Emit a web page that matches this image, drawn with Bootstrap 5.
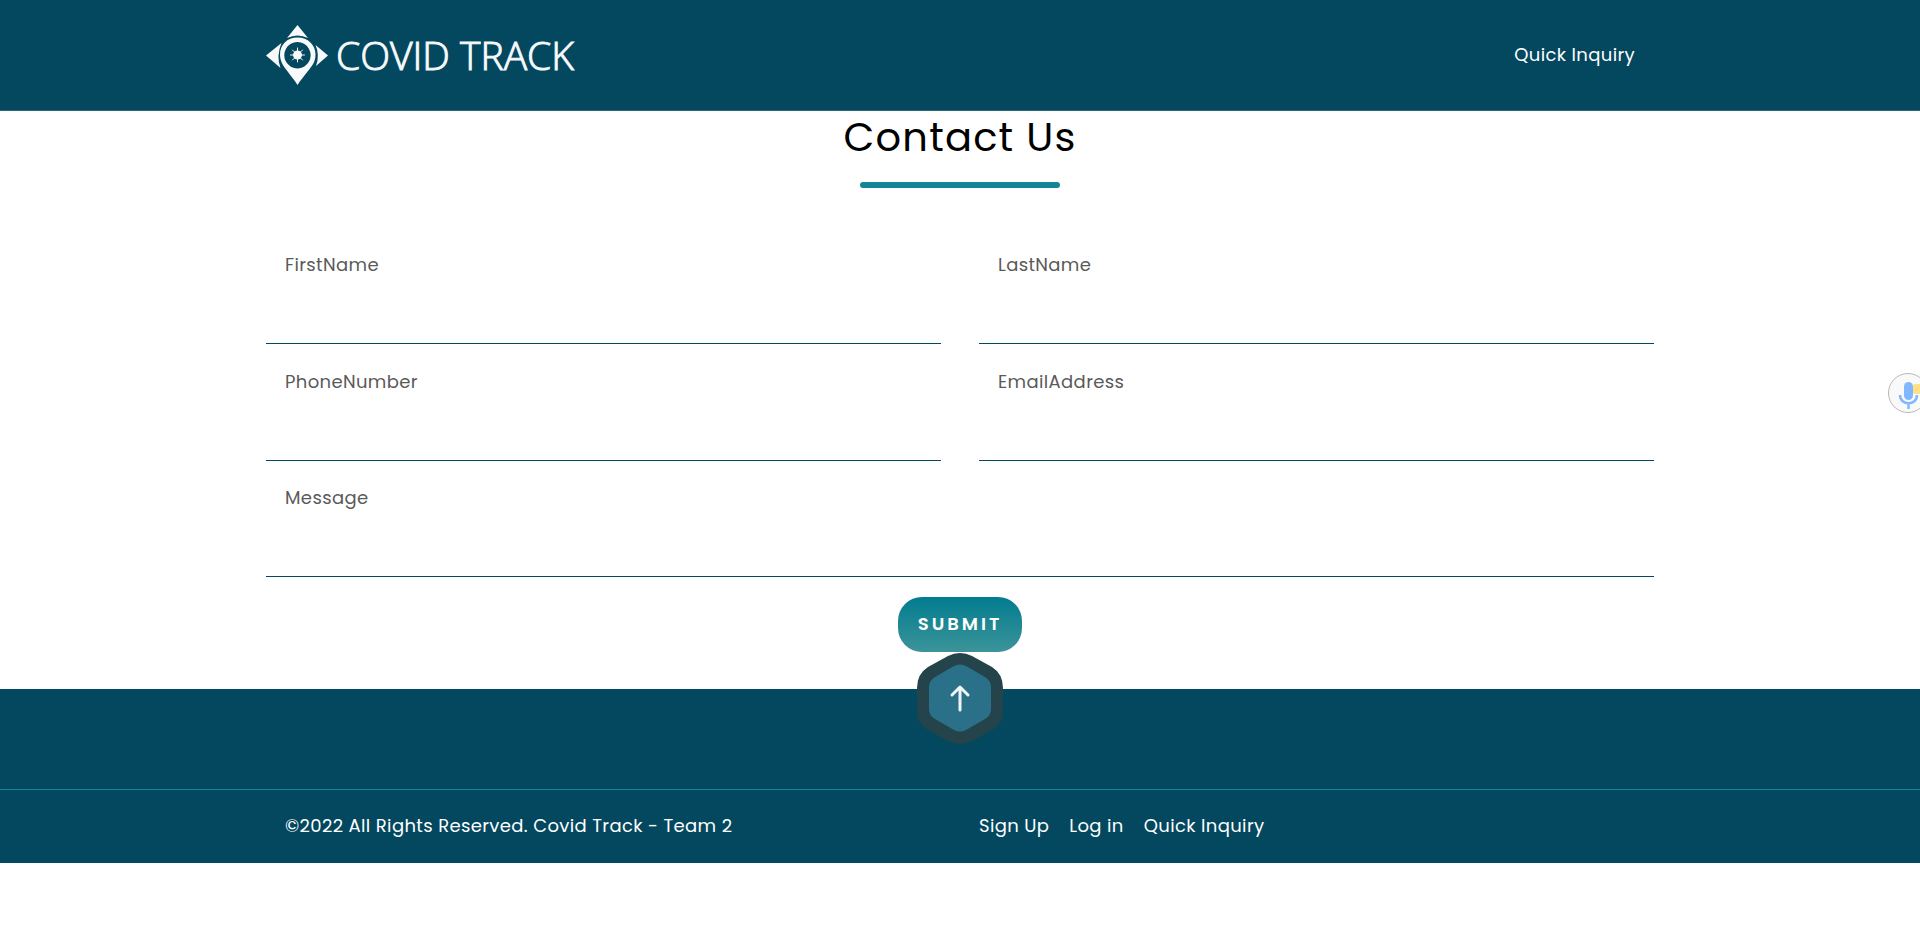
<!DOCTYPE html>
<html lang="en">
<head>
<meta charset="utf-8">
<meta name="viewport" content="width=device-width, initial-scale=1">
<title>Covid Track - Contact Us</title>
<link rel="stylesheet" href="https://cdn.jsdelivr.net/npm/bootstrap@5.3.0/dist/css/bootstrap.min.css">
<style>
  :root { --navy: #03485f; --teal: #148594; }
  body { font-family: Poppins, Inter, "Open Sans", sans-serif; font-size: 18px; line-height: 28px; letter-spacing: .02em; overflow-x: hidden; color: #000; }
  .page-width { max-width: 1426px; padding-left: 19px; padding-right: 19px; }
  .inset-x { padding-left: 19px; padding-right: 19px; }
  .site-header { background: var(--navy); border-bottom: 1px solid #2c6579; }
  .site-header .navbar { min-height: 110px; padding: 0; }
  .brand-name { font-family: "Open Sans", sans-serif; font-weight: 300; font-size: 39px; line-height: 52px; letter-spacing: normal; -webkit-text-stroke: 1px #f3f6f8; }
  .site-link { color: #fff; text-decoration: none; }
  .site-link:hover { color: #9fd5dc; }
  .page-title { font-size: 40px; line-height: 53px; font-weight: 400; letter-spacing: .03em; }
  .title-bar { width: 200px; height: 6px; border-radius: 3px; margin-top: 18px; background: var(--teal); }
  .contact-form { --bs-gutter-x: 38px; padding-top: 39px; }
  .line-field { height: 117px; border-bottom: 1px solid var(--navy); padding: 24px 19px 0; }
  .message-field { height: 116px; padding-top: 23px; }
  .line-field label { color: #5a5a5a; line-height: 28px; }
  .line-field .form-control { height: 48px; border: 0; padding: 0; resize: none; font-size: 18px; background: transparent; box-shadow: none; }
  .submit-btn { width: 124px; height: 55px; border: 0; border-radius: 24px; background: linear-gradient(#017c8f, #3c9499); color: #fff; font-weight: 600; font-size: 18px; line-height: 26px; letter-spacing: 3px; padding: 0 0 2px; }
  .site-footer { background: var(--navy); color: #fff; margin-top: 37px; }
  .footer-top { height: 100px; }
  .to-top { top: -37px; left: 50%; transform: translateX(-50%); line-height: 0; }
  .footer-bottom { border-top: 1px solid var(--teal); padding: 22px 0 23px; }
  .footer-bottom .row { --bs-gutter-x: 38px; }
  .footer-links { gap: 20px; }
  .voice-btn { right: -8px; top: 373px; width: 40px; height: 40px; line-height: 0; }
</style>
</head>
<body>
<header class="site-header" id="top">
  <nav class="navbar">
    <div class="container-fluid page-width">
      <a href="#" class="site-link d-flex align-items-center gap-2">
        <svg width="62" height="60" viewBox="0 0 62 60" fill="#f7f9fa" aria-hidden="true">
          <path d="M31.500 0 L42 13 Q31.500 8 21 13Z M15.500 18 L0 30.500 L14.500 43 Q10 31 15.500 18Z M49.500 20 L62 30.500 L50 41 Q54 30 49.500 20Z"/>
          <path fill-rule="evenodd" d="M31.500 12.500 C21 12.500 14 20 14 29.500 C14 37 18 42 22 47 C25 51 29 56 31.500 60 C34 56 38 51 42 46 C46 41 49.500 37 49.500 29.500 C49.500 20 42 12.500 31.500 12.500Z M31.500 17 A13.200 13.200 0 1 1 31.400 17Z"/>
          <circle cx="31.500" cy="30" r="4.500"/>
          <path d="M31.500 23v14M24.500 30h14M26.500 25l10 10M36.500 25l-10 10" stroke="#f7f9fa" stroke-width="1" stroke-linecap="round"/>
        </svg>
        <span class="brand-name">COVID TRACK</span>
      </a>
      <a href="#contact" class="site-link inset-x">Quick Inquiry</a>
    </div>
  </nav>
</header>

<main class="container-fluid page-width" id="contact">
  <h1 class="page-title text-center m-0">Contact Us</h1>
  <div class="title-bar mx-auto"></div>
  <form class="row contact-form" onsubmit="return false">
    <div class="col-md-6"><div class="line-field"><label for="first">FirstName</label><input id="first" type="text" class="form-control"></div></div>
    <div class="col-md-6"><div class="line-field"><label for="last">LastName</label><input id="last" type="text" class="form-control"></div></div>
    <div class="col-md-6"><div class="line-field"><label for="phone">PhoneNumber</label><input id="phone" type="tel" class="form-control"></div></div>
    <div class="col-md-6"><div class="line-field"><label for="email">EmailAddress</label><input id="email" type="email" class="form-control"></div></div>
    <div class="col-12"><div class="line-field message-field"><label for="message">Message</label><textarea id="message" class="form-control"></textarea></div></div>
    <div class="col-12 pt-3 mt-1 d-flex justify-content-center"><button type="submit" class="submit-btn">SUBMIT</button></div>
  </form>
</main>

<footer class="site-footer position-relative">
  <a href="#top" class="to-top position-absolute" aria-label="Back to top">
    <svg width="88" height="94" viewBox="0 0 88 94" aria-hidden="true">
      <path d="M32 4 Q44 -2 56 4 L76 15 Q87 22 87 36 V58 Q87 72 76 78 L56 89 Q44 95 32 89 L12 78 Q1 72 1 58 V36 Q1 22 12 15Z" fill="#25434b"/>
      <path d="M38 14 Q44 11 50 14 L69 25 Q75 29 75 35 V57 Q75 64 69 67 L50 78 Q44 81 38 78 L19 67 Q13 64 13 57 V35 Q13 29 19 25Z" fill="#2a7089"/>
      <path d="M44 58V36M36 43l8-8 8 8" fill="none" stroke="#eef5f6" stroke-width="3" stroke-linecap="round" stroke-linejoin="round"/>
    </svg>
  </a>
  <div class="footer-top"></div>
  <div class="footer-bottom">
    <div class="container-fluid page-width">
      <div class="row">
        <div class="col-md-6"><div class="inset-x">©2022 All Rights Reserved. Covid Track - Team 2</div></div>
        <div class="col-md-6 d-flex footer-links">
          <a href="#" class="site-link">Sign Up</a>
          <a href="#" class="site-link">Log in</a>
          <a href="#contact" class="site-link">Quick Inquiry</a>
        </div>
      </div>
    </div>
  </div>
</footer>

<div class="position-fixed top-0 start-0 w-100 h-100 overflow-hidden pe-none">
  <button type="button" class="voice-btn position-absolute border-0 bg-transparent p-0 pe-auto" aria-label="Voice input">
    <svg width="40" height="40" viewBox="0 0 40 40" aria-hidden="true">
      <circle cx="20" cy="20" r="19.500" fill="#f9f9f9" stroke="#b8b8b8"/>
      <rect x="25" y="11" width="10" height="10" rx="2" fill="#ffe083"/>
      <rect x="16" y="9" width="9" height="18" rx="4.500" fill="#80b8ff"/>
      <path d="M12 22c0 11 17 11 17 0M20.500 30v6" fill="none" stroke="#80b8ff" stroke-width="2.500"/>
    </svg>
  </button>
</div>
<script src="https://cdn.jsdelivr.net/npm/bootstrap@5.3.0/dist/js/bootstrap.bundle.min.js"></script>
</body>
</html>
